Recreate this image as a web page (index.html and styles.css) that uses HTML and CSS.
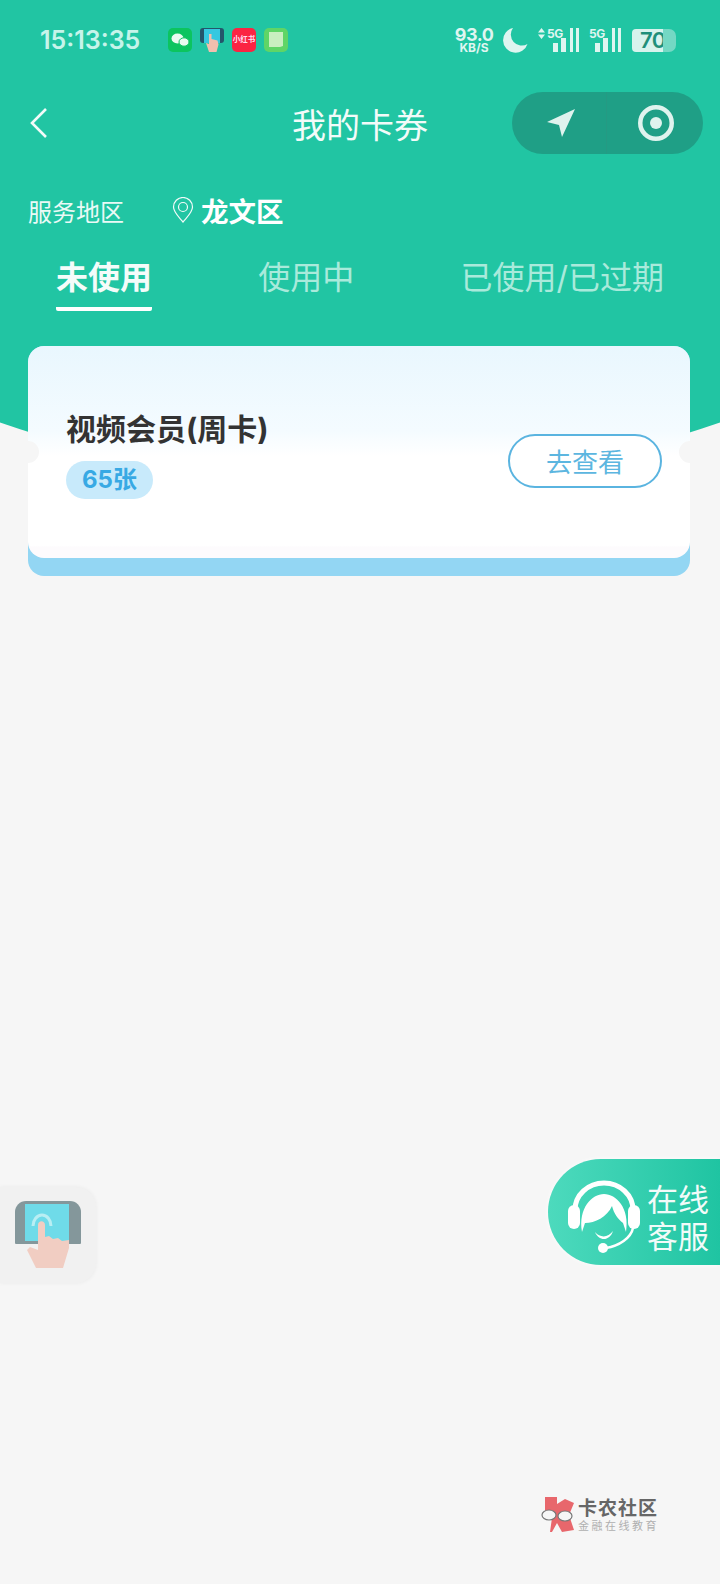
FILE: index.html
```html
<!DOCTYPE html>
<html>
<head>
    <title>我的卡券</title>
    <link rel="stylesheet" href="styles.css">
</head>
<body>
<div class="page">
    <header class="top">
        <div class="status-bar">
            <span class="status-time">15:13:35</span>
            <div class="status-apps">
                <svg class="app-icon" viewBox="0 0 24 24">
                    <rect width="24" height="24" rx="5" fill="#0cc45f"/>
                    <ellipse cx="9.500" cy="10.500" rx="6" ry="5" fill="#eafaf0"/>
                    <ellipse cx="16" cy="14" rx="5" ry="4.200" fill="#eafaf0" stroke="#0cc45f"/>
                </svg>
                <svg class="app-icon" viewBox="0 0 24 24">
                    <rect y="0" width="24" height="15" rx="3" fill="#24566b"/>
                    <rect x="4" y="1" width="16" height="14" fill="#35c8e0"/>
                    <path d="M9 6h2.500v5l6 1.500 1 4-2 7.500H9l-3-9 3 1z" fill="#f1bfae"/>
                </svg>
                <div class="app-red">小红书</div>
                <svg class="app-icon" viewBox="0 0 24 24">
                    <rect width="24" height="24" rx="5" fill="#5fd566"/>
                    <path d="M5 4h14v14l-3 1-2 0H5z" fill="#c9efc0"/>
                </svg>
            </div>
            <div class="status-right">
                <div class="net-speed">
                    <span class="net-value">93.0</span>
                    <span class="net-unit">KB/S</span>
                </div>
                <svg class="moon" viewBox="0 0 26 26">
                    <path d="M11 1a12.500 12.500 0 1 0 14.500 16A11 11 0 0 1 11 1z" fill="#dff5f0"/>
                </svg>
                <div class="signal">
                    <svg class="updown" width="7" height="11" viewBox="0 0 7 11">
                        <path d="M3.500 0 7 4.500H0zM3.500 11 0 6.500h7z" fill="#dff5f0"/>
                    </svg>
                    <span class="signal-label">5G</span>
                    <svg class="bars" viewBox="0 0 26 24">
                        <rect x="0" y="15" width="5" height="9"/>
                        <rect x="8" y="10" width="5" height="14"/>
                        <rect x="17" y="0" width="3" height="24"/>
                        <rect x="23" y="0" width="3" height="24"/>
                    </svg>
                </div>
                <div class="signal">
                    <span class="signal-label">5G</span>
                    <svg class="bars" viewBox="0 0 26 24">
                        <rect x="0" y="15" width="5" height="9"/>
                        <rect x="8" y="10" width="5" height="14"/>
                        <rect x="17" y="0" width="3" height="24"/>
                        <rect x="23" y="0" width="3" height="24"/>
                    </svg>
                </div>
                <div class="battery">
                    <span class="battery-level">70</span>
                    <span class="battery-rest"></span>
                </div>
            </div>
        </div>

        <nav class="nav-bar">
            <svg class="back-icon" viewBox="0 0 18 30">
                <path d="M16 1 2 15 16 29" fill="none" stroke="#f2fbf9" stroke-width="2.600"/>
            </svg>
            <h1 class="nav-title">我的卡券</h1>
            <div class="capsule">
                <div class="capsule-cell capsule-cell-left">
                    <svg width="32" height="32" viewBox="0 0 32 32">
                        <path d="M4 15 32 2 19 30 16 18z" fill="#dff3ee"/>
                    </svg>
                </div>
                <div class="capsule-cell capsule-cell-right">
                    <svg width="36" height="36" viewBox="0 0 36 36">
                        <circle cx="18" cy="18" r="15.750" fill="none" stroke="#dff3ee" stroke-width="4.500"/>
                        <circle cx="18" cy="18" r="6" fill="#dff3ee"/>
                    </svg>
                </div>
            </div>
        </nav>

        <div class="region">
            <span class="region-label">服务地区</span>
            <svg class="pin-icon" width="22" height="26" viewBox="0 0 22 26">
                <path d="M11 25C6 19 1.500 15 1.500 10a9.500 9.500 0 0 1 19 0C20.500 15 16 19 11 25z" fill="none" stroke="#f2fbf9" stroke-width="1.200"/>
                <circle cx="11" cy="10" r="4.500" fill="none" stroke="#f2fbf9" stroke-width="1.200"/>
            </svg>
            <span class="region-name">龙文区</span>
        </div>

        <div class="tabs">
            <div class="tab tab-active">未使用</div>
            <div class="tab">使用中</div>
            <div class="tab">已使用/已过期</div>
        </div>
    </header>

    <section class="coupon">
        <div class="coupon-body">
            <div class="coupon-info">
                <div class="coupon-title">视频会员(周卡)</div>
                <span class="coupon-count">65张</span>
            </div>
            <button class="coupon-button">去查看</button>
        </div>
    </section>

    <div class="float-hand">
        <svg width="70" height="70" viewBox="0 0 70 70">
            <path d="M12 1h44a11 11 0 0 1 11 11v31a1 1 0 0 1-1 1H2a1 1 0 0 1-1-1V12A11 11 0 0 1 12 1z" fill="#84979b"/>
            <rect x="11" y="4" width="44" height="37" fill="#6fdbe9"/>
            <path d="M19 26a9 11 0 0 1 18 0" fill="none" stroke="#b9eef3" stroke-width="3"/>
            <path d="M24 25c0-5 7-5 7 0v12l4-1 4 3 5-1 4 3 7-1v8l-6 20H22L13 50l3-3 8 3z" fill="#f1cdc2"/>
        </svg>
    </div>

    <div class="float-service">
        <svg class="service-icon" width="72" height="76" viewBox="0 0 72 76">
            <path d="M7 30a29 27 0 0 1 58 0" fill="none" stroke="#fff" stroke-width="5"/>
            <path d="M14 52C10 28 24 14 36 14s26 14 22 38c-1-3-2-6-3-9-5-4-9-9-11-17-5 11-17 17-27 17-1 3-2 6-3 9z" fill="#fff"/>
            <rect x="0" y="25" width="12" height="24" rx="6" fill="#fff"/>
            <rect x="60" y="25" width="12" height="24" rx="6" fill="#fff"/>
            <path d="M27 52c5 6 13 6 18-1-3 10-14 11-18 1z" fill="#fff"/>
            <path d="M65 48c-2 10-14 18-27 20" fill="none" stroke="#fff" stroke-width="2.500"/>
            <circle cx="35" cy="68" r="5" fill="#fff"/>
        </svg>
        <div class="service-text">在线<br>客服</div>
    </div>

    <div class="watermark">
        <svg width="34" height="36" viewBox="0 0 34 36">
            <path d="M4 0h12v7l8-5 9 4-5 12 5 15-12 2-5-9-5 9H9l2-14-7-5z" fill="#e8676c"/>
            <ellipse cx="8" cy="18" rx="7" ry="5" fill="#f6f6f6" stroke="#777" stroke-width="1.200"/>
            <ellipse cx="24" cy="19" rx="7" ry="5" fill="#f6f6f6" stroke="#777" stroke-width="1.200"/>
        </svg>
        <div class="watermark-text">
            <span class="watermark-name">卡农社区</span>
            <span class="watermark-sub">金融在线教育</span>
        </div>
    </div>
</div>
</body>
</html>
```

FILE: styles.css
```css
* {
    margin: 0;
    padding: 0;
    box-sizing: border-box;
}

body {
    font-family: Inter, "Noto Sans CJK SC", sans-serif;
    background-color: #f6f6f6;
    color: #333;
}

.page {
    position: relative;
    width: 720px;
    height: 1584px;
    overflow: hidden;
}

.top {
    height: 484px;
    background: #21c5a3;
    clip-path: circle(1100px at 50% -617px);
    color: #fff;
}

/* status bar */
.status-bar {
    display: flex;
    align-items: center;
    height: 80px;
    padding-left: 40px;
}

.status-time {
    width: 128px;
    font-size: 25px;
    font-weight: 600;
    color: #c6f4ea;
}

.status-apps {
    display: flex;
    gap: 8px;
    width: 287px;
}

.app-icon {
    width: 24px;
    height: 24px;
}

.app-red {
    width: 24px;
    height: 24px;
    border-radius: 5px;
    background: #fb2443;
    color: #fde;
    font-size: 7.500px;
    font-weight: 700;
    line-height: 24px;
    text-align: center;
    white-space: nowrap;
}

.status-right {
    display: flex;
    align-items: center;
}

.net-speed {
    display: flex;
    flex-direction: column;
    align-items: center;
    width: 38px;
    margin-right: 9px;
    color: #dff5f0;
    font-weight: 700;
}

.net-value {
    font-size: 18px;
    line-height: 14px;
    letter-spacing: -0.500px;
}

.net-unit {
    font-size: 12px;
    line-height: 11px;
    white-space: nowrap;
}

.moon {
    width: 26px;
    height: 26px;
    margin-right: 10px;
}

.signal {
    display: flex;
    align-items: flex-start;
    height: 24px;
    margin-right: 10px;
}

.signal-label {
    width: 15px;
    margin-right: -9px;
    font-size: 12px;
    font-weight: 700;
    line-height: 12px;
    letter-spacing: -0.500px;
    color: #dff5f0;
    white-space: nowrap;
}

.updown {
    margin-right: 2px;
}

.bars {
    width: 26px;
    height: 24px;
    fill: #dff5f0;
}

.battery {
    display: flex;
    align-items: center;
    height: 23px;
    margin-left: 1px;
}

.battery-level {
    width: 31px;
    height: 23px;
    padding-left: 8px;
    border-radius: 4px 0 0 4px;
    background: #d8f3ed;
    color: #1f8f7a;
    font-size: 22px;
    font-weight: 600;
    line-height: 23px;
    letter-spacing: -0.500px;
    white-space: nowrap;
}

.battery-rest {
    width: 13px;
    height: 23px;
    border-radius: 0 7px 7px 0;
    background: #74d8c4;
}

/* nav */
.nav-bar {
    display: grid;
    grid-template-columns: 1fr auto 1fr;
    align-items: center;
    height: 86px;
    padding: 0 17px;
}

.back-icon {
    width: 18px;
    height: 30px;
    margin-left: 13px;
}

.nav-title {
    font-size: 34px;
    font-weight: 400;
    color: #f2fbf9;
}

.capsule {
    justify-self: end;
    display: flex;
    width: 191px;
    height: 62px;
    border-radius: 31px;
    background: #1f9f86;
}

.capsule-cell {
    display: flex;
    flex: 1;
    align-items: center;
    justify-content: center;
}

.capsule-cell-left {
    border-right: 1px solid #259a83;
}

.capsule-cell-right {
    padding-left: 3px;
}

/* region row */
.region {
    display: flex;
    align-items: center;
    height: 46px;
    margin-top: 21px;
    padding-left: 28px;
}

.region-label {
    width: 144px;
    font-size: 24px;
    color: #eafaf6;
}

.pin-icon {
    margin-right: 7px;
}

.region-name {
    font-size: 27.500px;
    font-weight: 700;
}

/* tabs */
.tabs {
    display: flex;
    justify-content: space-between;
    margin-top: 20px;
    padding: 0 56px;
}

.tab {
    height: 58px;
    font-size: 32px;
    line-height: 50px;
    color: #a9eadb;
    white-space: nowrap;
}

.tab-active {
    border-bottom: 4px solid #fff;
    border-radius: 0 0 2px 2px;
    font-weight: 700;
    color: #f4fcfa;
}

/* coupon card */
.coupon {
    position: relative;
    width: 662px;
    height: 230px;
    margin: -138px 0 0 28px;
    border-radius: 16px;
    background: #93d6f3;
}

.coupon::before,
.coupon::after {
    content: "";
    position: absolute;
    top: 95px;
    width: 22px;
    height: 22px;
    border-radius: 50%;
    background: #f6f6f6;
}

.coupon::before {
    left: -11px;
}

.coupon::after {
    right: -11px;
}

.coupon-body {
    display: flex;
    align-items: center;
    justify-content: space-between;
    height: 212px;
    padding: 0 28px 0 38px;
    border-radius: 16px;
    background: linear-gradient(#e9f7fe, #f4fbff 40%, #fff 52%, #fff 94%, #fdfbfd 95%);
}

.coupon-info {
    margin-top: 3px;
}

.coupon-title {
    font-size: 30px;
    font-weight: 700;
    line-height: 40px;
    color: #333;
}

.coupon-count {
    display: inline-block;
    height: 38px;
    margin-top: 12px;
    padding: 0 16px;
    border-radius: 19px;
    background: #c8eafb;
    color: #38a9e4;
    font-size: 24px;
    font-weight: 700;
    line-height: 38px;
}

.coupon-button {
    width: 154px;
    height: 54px;
    margin-top: 17px;
    border: 2px solid #5ab4e0;
    border-radius: 27px;
    background: #fff;
    color: #5cb6e0;
    font-family: inherit;
    font-size: 26px;
}

/* floating buttons */
.float-hand {
    position: absolute;
    left: 0;
    top: 1187px;
    display: flex;
    align-items: center;
    justify-content: center;
    width: 96px;
    height: 96px;
    padding-left: 2px;
    border-radius: 0 20px 20px 0;
    background: #f1f1f1;
    box-shadow: 0 0 4px rgba(0, 0, 0, 0.05);
}

.float-service {
    position: absolute;
    right: 0;
    top: 1159px;
    display: flex;
    align-items: center;
    width: 172px;
    height: 106px;
    padding: 11px 0 0 20px;
    border-radius: 53px 0 0 53px;
    background: linear-gradient(90deg, #4ddabd, #1fc4a2);
    box-shadow: 0 0 5px rgba(255, 255, 255, 0.8);
}

.service-icon {
    flex-shrink: 0;
}

.service-text {
    margin-left: 7px;
    color: #f2fbf9;
    font-size: 31px;
    line-height: 37px;
}

.watermark {
    position: absolute;
    left: 541px;
    top: 1497px;
    display: flex;
    align-items: center;
    gap: 3px;
}

.watermark-text {
    display: flex;
    flex-direction: column;
}

.watermark-name {
    color: #666;
    font-size: 19px;
    font-weight: 700;
    line-height: 21px;
    letter-spacing: 1px;
}

.watermark-sub {
    color: #b0b0b0;
    font-size: 11px;
    line-height: 14px;
    letter-spacing: 2.500px;
    white-space: nowrap;
}
```
